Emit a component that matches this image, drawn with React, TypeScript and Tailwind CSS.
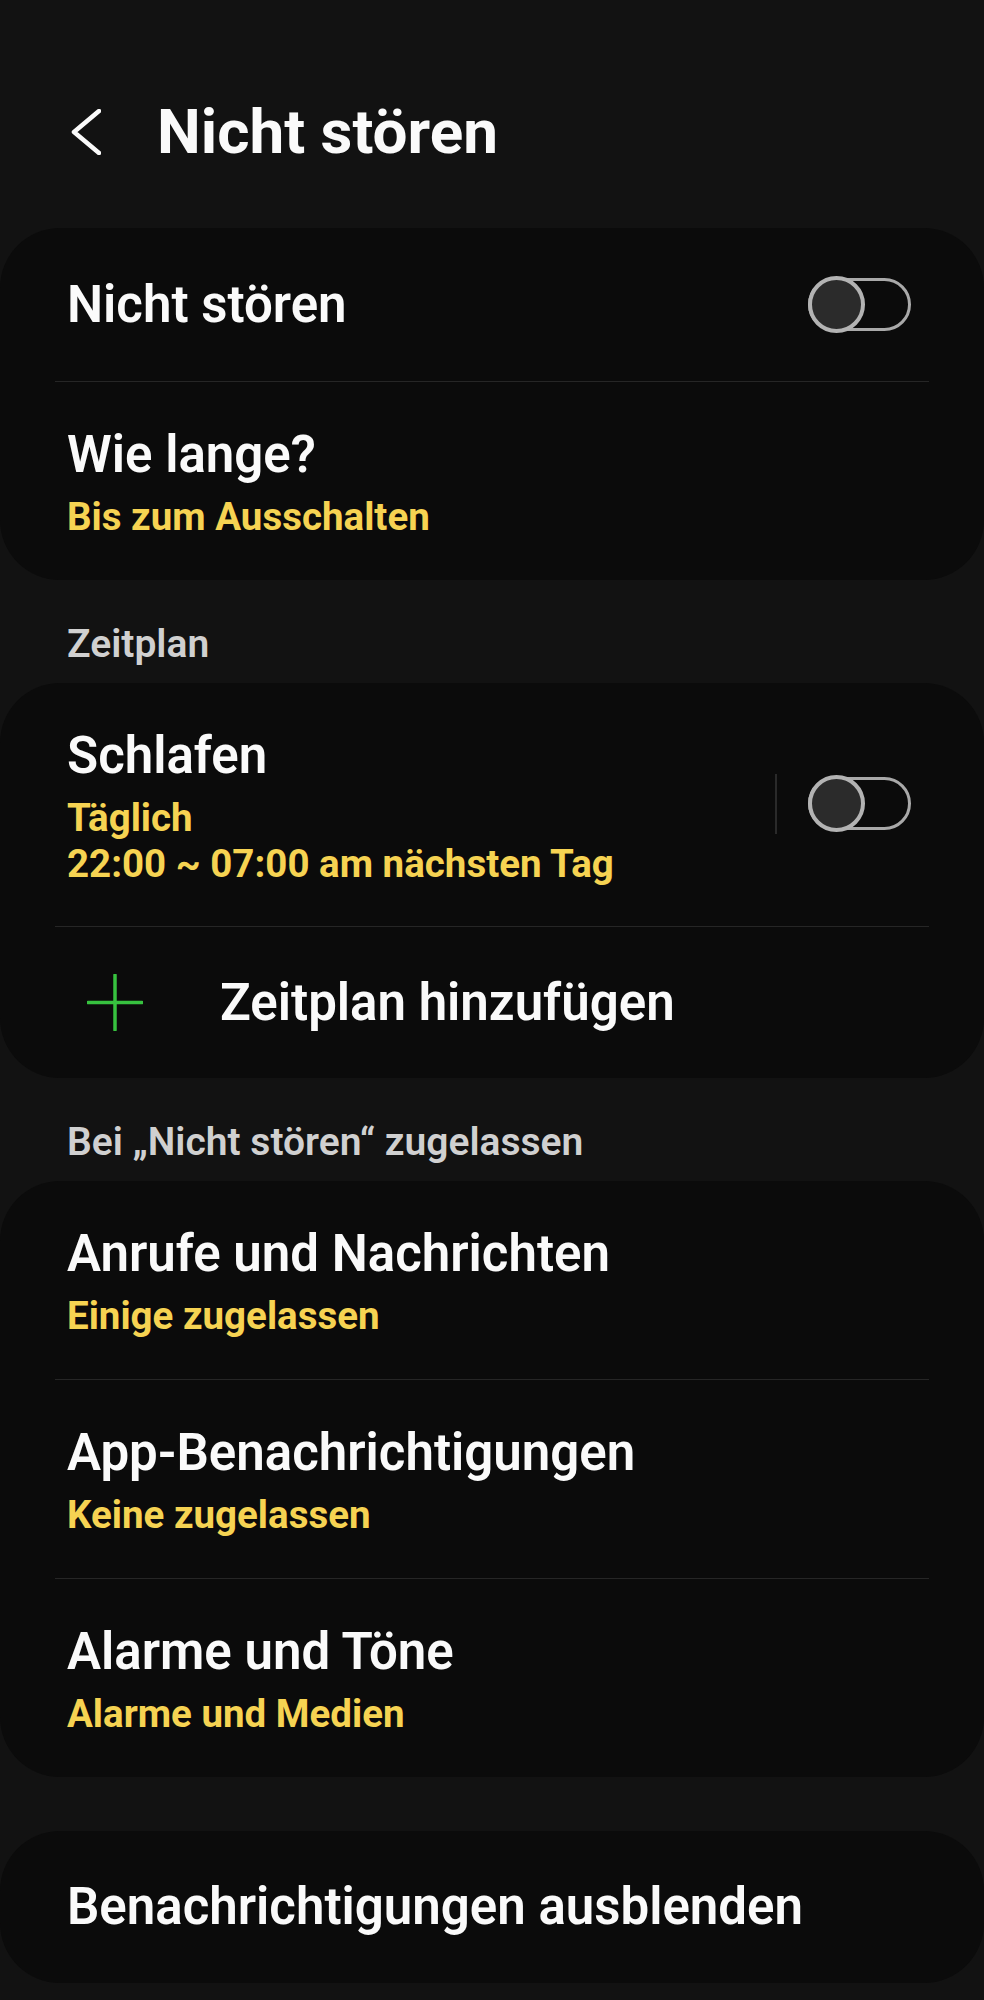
import React from "react";

const Toggle = () => (
  <div className="relative h-[57px] w-[103px] shrink-0">
    <div className="absolute left-0 right-0 top-[2px] h-[53px] rounded-full border-[3px] border-[#a9a9a9]" />
    <div className="absolute left-0 top-0 h-[57px] w-[57px] rounded-full border-[4px] border-[#b3b3b3] bg-[#2b2b2b]" />
  </div>
);

const Divider = () => <div className="mx-[55px] h-px bg-[#262626]" />;

const Title = ({ children }: { children: React.ReactNode }) => (
  <div className="text-[51px] font-semibold leading-[60px] text-[#fafafa]">{children}</div>
);

const Sub = ({ children }: { children: React.ReactNode }) => (
  <div className="text-[38.5px] font-bold leading-[46px] text-[#f6d352]">{children}</div>
);

const TwoLine = ({ title, sub }: { title: string; sub: string }) => (
  <div className="pb-[40px] pl-[67px] pt-[43px]">
    <Title>{title}</Title>
    <div className="mt-[9px]">
      <Sub>{sub}</Sub>
    </div>
  </div>
);

const Section = ({ children }: { children: React.ReactNode }) => (
  <div className="pb-[17px] pl-[67px] pt-[42px] text-[39px] font-semibold leading-[44px] text-[#d0d0d0]">
    {children}
  </div>
);

export default function App() {
  return (
    <div className="min-h-[2000px] bg-[#121212] font-['Roboto',sans-serif] text-white">
      {/* header */}
      <div className="flex h-[228px] items-center gap-[56px] pl-[71px] pt-[36px]">
        <svg width="30" height="46" viewBox="0 0 30 46" fill="none">
          <path d="M28 2 L3 23 L28 44" stroke="#fafafa" strokeWidth="4.5" strokeLinecap="round" strokeLinejoin="round" />
        </svg>
        <h1 className="text-[62px] font-bold leading-[76px] text-[#fafafa]">Nicht stören</h1>
      </div>

      {/* main switch */}
      <div className="rounded-[60px] bg-[#0b0b0b]">
        <div className="flex h-[153px] items-center justify-between pl-[67px] pr-[73px]">
          <Title>Nicht stören</Title>
          <Toggle />
        </div>
        <Divider />
        <TwoLine title="Wie lange?" sub="Bis zum Ausschalten" />
      </div>

      <Section>Zeitplan</Section>
      <div className="rounded-[60px] bg-[#0b0b0b]">
        <div className="flex items-center justify-between pb-[39px] pl-[67px] pr-[73px] pt-[43px]">
          <div>
            <Title>Schlafen</Title>
            <div className="mt-[9px]">
              <Sub>Täglich</Sub>
              <Sub>22:00 ~ 07:00 am nächsten Tag</Sub>
            </div>
          </div>
          <div className="-mt-[6px] flex items-center gap-[31px]">
            <div className="h-[60px] w-[2px] bg-[#2a2a2a]" />
            <Toggle />
          </div>
        </div>
        <Divider />
        <div className="flex h-[151px] items-center gap-[77px] pl-[87px]">
          <svg width="56" height="57" viewBox="0 0 56 57">
            <path d="M28 1 V56 M1 28.5 H55" stroke="#37c23f" strokeWidth="3.5" strokeLinecap="round" />
          </svg>
          <Title>Zeitplan hinzufügen</Title>
        </div>
      </div>

      <Section>Bei „Nicht stören“ zugelassen</Section>
      <div className="rounded-[60px] bg-[#0b0b0b]">
        <TwoLine title="Anrufe und Nachrichten" sub="Einige zugelassen" />
        <Divider />
        <TwoLine title="App-Benachrichtigungen" sub="Keine zugelassen" />
        <Divider />
        <TwoLine title="Alarme und Töne" sub="Alarme und Medien" />
      </div>

      <div className="mt-[54px] flex h-[152px] items-center rounded-[60px] bg-[#0b0b0b] pl-[67px]">
        <Title>Benachrichtigungen ausblenden</Title>
      </div>
    </div>
  );
}
